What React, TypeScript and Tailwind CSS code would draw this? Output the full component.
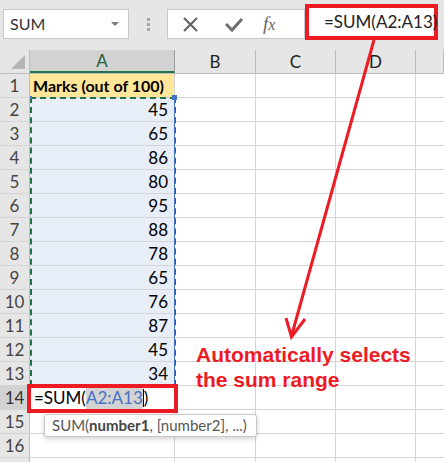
import type { ReactNode } from 'react';

const marks = [45, 65, 86, 80, 95, 88, 78, 65, 76, 87, 45, 34];

const cols = ['A', 'B', 'C', 'D', 'E'];
const colWidths = ['w-[145px]', 'w-[81px]', 'w-[80px]', 'w-[80px]', 'flex-1'];

function Cell({ className = '', children }: { className?: string; children?: ReactNode }) {
  return <div className={`h-full border-r border-[#d4d4d4] ${className}`}>{children}</div>;
}

function Row({ n }: { n: number }) {
  const selected = n === 14;
  let aCell: ReactNode;
  if (n === 1) {
    aCell = (
      <Cell className="w-[145px] bg-[#ffe699] flex items-center pl-[3px] font-bold text-[16px] whitespace-nowrap overflow-hidden text-black">
        Marks (out of 100)
      </Cell>
    );
  } else if (n >= 2 && n <= 13) {
    aCell = (
      <Cell className="w-[145px] bg-[#e8eef8] flex items-center justify-end pr-[6px] text-[17px] text-black">
        {marks[n - 2]}
      </Cell>
    );
  } else if (selected) {
    aCell = (
      <Cell className="w-[145px] bg-white flex items-center pl-[4px] text-[17px] text-black whitespace-nowrap">
        =SUM(<span className="bg-[#d3d3d3] text-[#4472c4]">A2:A13</span>
        <span className="w-px h-[18px] bg-black" />)
      </Cell>
    );
  } else {
    aCell = <Cell className="w-[145px] bg-white" />;
  }

  return (
    <div className="flex h-[24px] border-b border-[#d4d4d4] shrink-0">
      <div
        className={`w-[30px] h-full flex items-center justify-center text-[17px] border-r border-[#bdbdbd] ${
          selected ? 'bg-[#d2d2d2] text-[#333]' : 'bg-[#e6e6e6] text-[#444]'
        }`}
      >
        {n <= 16 ? n : ''}
      </div>
      {aCell}
      <Cell className="w-[81px] bg-white" />
      <Cell className="w-[80px] bg-white" />
      <Cell className="w-[80px] bg-white" />
      <div className="flex-1 h-full bg-white" />
    </div>
  );
}

export default function App() {
  return (
    <div className="relative w-[444px] h-[462px] overflow-hidden bg-[#e6e6e6] font-['Lato','Noto_Sans',sans-serif] text-[#222]">
      {/* Formula bar */}
      <div className="flex items-start h-[50px] pt-[9px]">
        <div className="ml-[3px] w-[126px] h-[30px] bg-white border border-[#c6c6c6] flex items-center justify-between pl-[6px] pr-[9px]">
          <span className="text-[16px] text-[#333]">SUM</span>
          <span className="w-0 h-0 border-l-[4px] border-r-[4px] border-t-[4px] border-l-transparent border-r-transparent border-t-[#7a7a7a]" />
        </div>
        <div className="w-[38px] h-[30px] flex flex-col items-center justify-center gap-[2px]">
          <span className="w-[3px] h-[3px] bg-[#a6a6a6]" />
          <span className="w-[3px] h-[3px] bg-[#a6a6a6]" />
          <span className="w-[3px] h-[3px] bg-[#a6a6a6]" />
        </div>
        <div className="w-[138px] h-[30px] bg-white border border-[#c6c6c6] flex items-center">
          <svg width="46" height="28" viewBox="0 0 46 28" className="shrink-0">
            <path d="M16 8 L29 21 M29 8 L16 21" stroke="#5f5f5f" strokeWidth="2" fill="none" />
          </svg>
          <svg width="40" height="28" viewBox="0 0 40 28" className="shrink-0">
            <path d="M12 14 L18 20 L28 9" stroke="#6f6f6f" strokeWidth="3" fill="none" />
          </svg>
          <span className="ml-[9px] font-['Liberation_Serif',serif] italic text-[19px] text-[#666]">
            f<span className="text-[16px]">x</span>
          </span>
        </div>
        <div className="-mt-[5px] w-[133px] h-[36px] bg-white border-[4px] border-[#ed1c24] flex items-center pl-[15px] text-[17px] text-[#222] whitespace-nowrap">
          =SUM(A2:A13)
        </div>
      </div>

      {/* Column headers */}
      <div className="flex h-[24px] border-b border-[#bdbdbd]">
        <div className="w-[30px] h-full relative border-r border-[#bdbdbd] bg-[#e6e6e6]">
          <svg width="16" height="16" className="absolute right-[3px] bottom-[3px]">
            <polygon points="15,1 15,15 1,15" fill="#b5b5b5" />
          </svg>
        </div>
        {cols.map((c, i) => (
          <div
            key={c}
            className={`${colWidths[i]} h-full flex items-center justify-center text-[17px] ${
              i === 0
                ? 'bg-[#d2d2d2] text-[#1e5e3e] border-b-[2px] border-[#217346] border-r border-r-[#9c9c9c]'
                : 'text-[#222] border-r border-[#bdbdbd]'
            }`}
          >
            {i < 4 ? c : ''}
          </div>
        ))}
      </div>

      {/* Rows */}
      <div className="flex flex-col">
        {Array.from({ length: 17 }, (_, i) => (
          <Row key={i} n={i + 1} />
        ))}
      </div>

      {/* Copy range marching ants */}
      <div className="absolute left-[30px] top-[97px] w-[146px] h-[289px] border-[2px] border-dashed border-[#217346]" />
      <div className="absolute left-[174px] top-[99px] w-px h-[286px] bg-[#4472c4]" />
      <div className="absolute left-[172px] top-[95px] w-[5px] h-[5px] bg-[#4472c4]" />
      <div className="absolute left-[30px] top-[96px] w-[2px] h-[3px] bg-[#4472c4]" />

      {/* Active cell red frame */}
      <div className="absolute left-[27px] top-[384px] w-[151px] h-[29px] border-[4px] border-[#ed1c24]" />

      {/* Function tooltip */}
      <div className="absolute left-[44px] top-[414px] w-[213px] h-[23px] bg-white border border-[#c8c8c8] rounded-[3px] shadow-[0_2px_5px_rgba(0,0,0,0.18)] flex items-center pl-[7px] text-[15px] text-[#555] whitespace-nowrap">
        SUM(<b className="text-[#444]">number1</b>, [number2], ...)
      </div>

      {/* Annotation */}
      <div className="absolute left-[196px] top-[342px] font-['Liberation_Sans',Arial,sans-serif] font-bold text-[21px] leading-[25px] text-[#ed1c24] whitespace-nowrap">
        <div>Automatically selects</div>
        <div>the sum range</div>
      </div>

      <svg className="absolute inset-0 pointer-events-none" width="444" height="462">
        <path d="M374 40 L291.5 336" stroke="#ed1c24" strokeWidth="3" fill="none" />
        <path d="M286 318 L291.5 337 L305 319" stroke="#ed1c24" strokeWidth="3" fill="none" />
      </svg>
    </div>
  );
}
